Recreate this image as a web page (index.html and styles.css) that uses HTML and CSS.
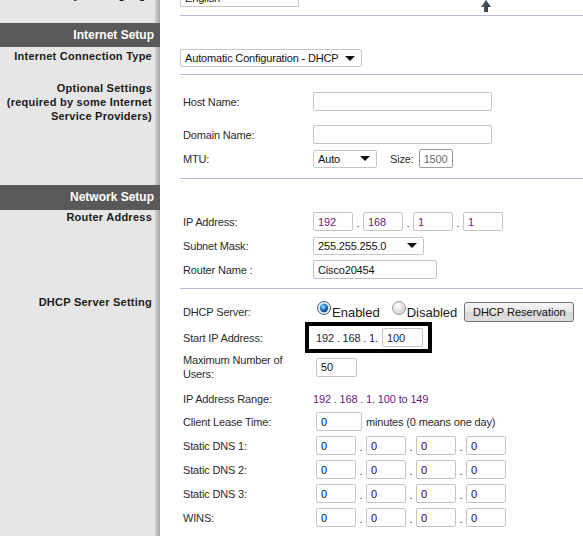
FILE: index.html
```html
<html lang="en">
<head>
    <meta charset="UTF-8">
    <title>Basic Setup</title>
    <link rel="stylesheet" href="styles.css">
</head>
<body>
<div class="page">

    <section class="sec lang">
        <div class="side"><p class="side-label">Select your language</p></div>
        <div class="main ruled">
            <div class="lang-row">
                <div class="select sel-lang"><span>English</span><i class="caret"></i></div>
                <svg class="up" width="10" height="12" viewBox="0 0 10 12">
                    <defs>
                        <linearGradient id="ug" x1="0" y1="0" x2="1" y2="0">
                            <stop offset="0" stop-color="#5b6570"/>
                            <stop offset="1" stop-color="#2a3037"/>
                        </linearGradient>
                    </defs>
                    <polygon points="5,0 10,7 7,7 7,12 3,12 3,7 0,7" fill="url(#ug)"/>
                </svg>
            </div>
        </div>
    </section>

    <section class="sec head">
        <div class="side"><h2 class="bar">Internet Setup</h2></div>
        <div class="main"></div>
    </section>

    <section class="sec conn">
        <div class="side"><p class="side-label">Internet Connection Type</p></div>
        <div class="main ruled">
            <div class="select sel-conn"><span>Automatic Configuration - DHCP</span><i class="caret"></i></div>
        </div>
    </section>

    <section class="sec optional">
        <div class="side"><p class="side-label">Optional Settings<br>(required by some Internet<br>Service Providers)</p></div>
        <div class="main ruled">
            <div class="row">
                <span class="lbl">Host Name:</span>
                <input class="txt w-host" type="text" value="">
            </div>
            <div class="row gap-domain">
                <span class="lbl">Domain Name:</span>
                <input class="txt w-host" type="text" value="">
            </div>
            <div class="row">
                <span class="lbl">MTU:</span>
                <div class="select sel-mtu"><span>Auto</span><i class="caret"></i></div>
                <span class="size-lbl">Size:</span>
                <input class="txt w-size dim" type="text" value="1500">
            </div>
        </div>
    </section>

    <section class="sec head head-net">
        <div class="side"><h2 class="bar">Network Setup</h2></div>
        <div class="main"></div>
    </section>

    <section class="sec router">
        <div class="side"><p class="side-label">Router Address</p></div>
        <div class="main ruled">
            <div class="row">
                <span class="lbl">IP Address:</span>
                <input class="txt w-oct ip" type="text" value="192"><span class="dot">.</span>
                <input class="txt w-oct ip" type="text" value="168"><span class="dot">.</span>
                <input class="txt w-oct ip" type="text" value="1"><span class="dot">.</span>
                <input class="txt w-oct ip" type="text" value="1">
            </div>
            <div class="row">
                <span class="lbl">Subnet Mask:</span>
                <div class="select sel-mask"><span>255.255.255.0</span><i class="caret"></i></div>
            </div>
            <div class="row">
                <span class="lbl">Router Name :</span>
                <input class="txt w-name" type="text" value="Cisco20454">
            </div>
        </div>
    </section>

    <section class="sec dhcp">
        <div class="side"><p class="side-label">DHCP Server Setting</p></div>
        <div class="main">
            <div class="row row-server">
                <span class="lbl">DHCP Server:</span>
                <label class="opt">
                    <svg width="14" height="14" viewBox="0 0 14 14">
                        <defs>
                            <radialGradient id="on" cx="0.4" cy="0.35" r="0.7">
                                <stop offset="0" stop-color="#bfe6ff"/>
                                <stop offset="0.45" stop-color="#2a8ad8"/>
                                <stop offset="1" stop-color="#0b2f6b"/>
                            </radialGradient>
                        </defs>
                        <circle cx="7" cy="7" r="6.5" fill="#e8eef4" stroke="#4b5d72"/>
                        <circle cx="7" cy="7" r="4.2" fill="url(#on)"/>
                    </svg>
                    <span>Enabled</span>
                </label>
                <label class="opt">
                    <svg width="14" height="14" viewBox="0 0 14 14">
                        <defs>
                            <radialGradient id="off" cx="0.4" cy="0.35" r="0.7">
                                <stop offset="0" stop-color="#ffffff"/>
                                <stop offset="1" stop-color="#cfcfcf"/>
                            </radialGradient>
                        </defs>
                        <circle cx="7" cy="7" r="6.5" fill="url(#off)" stroke="#9a9a9a"/>
                    </svg>
                    <span>Disabled</span>
                </label>
                <button class="btn" type="button">DHCP Reservation</button>
            </div>
            <div class="row row-start">
                <span class="lbl">Start IP Address:</span>
                <div class="mark">
                    <span class="fixed">192 . 168 . 1.</span>
                    <input class="txt w-start" type="text" value="100">
                </div>
            </div>
            <div class="row row-users">
                <span class="lbl">Maximum Number of<br>Users:</span>
                <input class="txt w-users pad" type="text" value="50">
            </div>
            <div class="row row-range">
                <span class="lbl">IP Address Range:</span>
                <span class="ip">192 . 168 . 1. 100 to 149</span>
            </div>
            <div class="row row-lease">
                <span class="lbl">Client Lease Time:</span>
                <input class="txt w-lease pad" type="text" value="0">
                <span class="after">minutes (0 means one day)</span>
            </div>
            <div class="row">
                <span class="lbl">Static DNS 1:</span>
                <input class="txt w-oct pad" type="text" value="0"><span class="dot">.</span>
                <input class="txt w-oct" type="text" value="0"><span class="dot">.</span>
                <input class="txt w-oct" type="text" value="0"><span class="dot">.</span>
                <input class="txt w-oct" type="text" value="0">
            </div>
            <div class="row">
                <span class="lbl">Static DNS 2:</span>
                <input class="txt w-oct pad" type="text" value="0"><span class="dot">.</span>
                <input class="txt w-oct" type="text" value="0"><span class="dot">.</span>
                <input class="txt w-oct" type="text" value="0"><span class="dot">.</span>
                <input class="txt w-oct" type="text" value="0">
            </div>
            <div class="row">
                <span class="lbl">Static DNS 3:</span>
                <input class="txt w-oct pad" type="text" value="0"><span class="dot">.</span>
                <input class="txt w-oct" type="text" value="0"><span class="dot">.</span>
                <input class="txt w-oct" type="text" value="0"><span class="dot">.</span>
                <input class="txt w-oct" type="text" value="0">
            </div>
            <div class="row">
                <span class="lbl">WINS:</span>
                <input class="txt w-oct pad" type="text" value="0"><span class="dot">.</span>
                <input class="txt w-oct" type="text" value="0"><span class="dot">.</span>
                <input class="txt w-oct" type="text" value="0"><span class="dot">.</span>
                <input class="txt w-oct" type="text" value="0">
            </div>
        </div>
    </section>

</div>
</body>
</html>
```

FILE: styles.css
```css
body {
    margin: 0;
    font-family: "Liberation Sans", Arial, sans-serif;
    font-size: 11px;
    letter-spacing: -0.16px;
    color: #2b2b2b;
    overflow: hidden;
}
.page {
    margin-top: -12px;
    min-height: calc(100vh + 12px);
    background: linear-gradient(to right, #e6e6e6 0, #e6e6e6 155px, #d2d2d2 155px, #a3a3a3 160px, #fff 160px);
}
.sec {
    display: grid;
    grid-template-columns: 160px 1fr;
}
.side-label {
    margin: 0;
    padding-right: 8px;
    text-align: right;
    font-weight: bold;
    font-size: 11px;
    line-height: 14px;
    letter-spacing: 0.25px;
    color: #1a1a1a;
}
.bar {
    margin: 0;
    height: 24px;
    padding-right: 6px;
    background: #595959;
    color: #fff;
    font-size: 12px;
    line-height: 24px;
    font-weight: bold;
    letter-spacing: 0;
    text-align: right;
}
.main {
    margin-left: 20px;
}
.ruled {
    border-bottom: 1px solid #b9b9e0;
}

/* sections */
.lang .main { padding-bottom: 8px; }
.lang-row { display: flex; align-items: flex-end; }
.up { margin-left: 182px; margin-bottom: -5px; }
.head { margin-top: 7px; }
.head-net { margin-top: 6px; }
.head-net .bar { height: 25px; line-height: 25px; }
.conn .side-label { padding-top: 2px; }
.conn .main { padding: 2px 0 7px; }
.optional .side-label { padding-top: 6px; }
.optional .main { padding: 17px 0 10px; }
.router .main { padding: 2px 0 9px; }
.dhcp .side-label { padding-top: 6px; }
.dhcp .main { padding-top: 12px; }

/* rows */
.row {
    display: flex;
    align-items: center;
    height: 19px;
    padding-left: 3px;
    margin-top: 5px;
}
.main .row:first-child { margin-top: 0; }
.row.gap-domain { margin-top: 14px; }
.lbl {
    width: 130px;
    flex: none;
    line-height: 14px;
}
.row-server { height: 21px; }
.row-start { height: 31px; margin-top: 0; }
.row-users { height: 28px; margin-top: 0; }
.row-range { margin-top: 8px; }
.row-lease { margin-top: 4px; }

/* controls */
.txt {
    box-sizing: border-box;
    height: 19px;
    margin: 0;
    padding: 0 4px;
    border: 1px solid #c4c4c4;
    border-radius: 2px;
    font-family: inherit;
    font-size: 11px;
    letter-spacing: inherit;
    color: #111;
    background: #fff;
}
.txt.ip, .ip { color: #6a1b78; }
.fixed { color: #2a1a3a; }
.txt.dim { border-color: #9c9c9c; color: #6d6d6d; }
.pad { margin-left: 3px; }
.w-host { width: 179px; }
.w-size { width: 34px; margin-left: 5px; }
.w-oct { width: 40px; }
.w-name { width: 124px; }
.w-start { width: 41px; margin-left: 4px; color: #2a1a3a; }
.w-users { width: 41px; }
.w-lease { width: 46px; }
.dot {
    width: 10px;
    text-align: center;
    align-self: flex-end;
    line-height: 16px;
}
.size-lbl { margin-left: 13px; }
.after { margin-left: 4px; }

.select {
    box-sizing: border-box;
    display: flex;
    align-items: center;
    justify-content: space-between;
    height: 18px;
    padding: 0 6px 0 4px;
    border: 1px solid #c6c6c6;
    border-radius: 2px;
    background: #fff;
    color: #111;
}
.caret {
    flex: none;
    width: 0;
    height: 0;
    border-left: 5px solid transparent;
    border-right: 5px solid transparent;
    border-top: 5px solid #111;
}
.sel-lang { width: 119px; height: 19px; }
.sel-conn { width: 182px; }
.sel-mtu { width: 64px; }
.sel-mask { width: 111px; }

.opt {
    display: flex;
    align-items: flex-start;
    align-self: flex-start;
    margin-left: 4px;
}
.opt + .opt { margin-left: 12px; }
.opt span {
    margin-top: 4px;
    margin-left: 1px;
    font-size: 13px;
    line-height: 15px;
    letter-spacing: 0;
    color: #1a1a1a;
}
.btn {
    margin-left: 7px;
    height: 20px;
    width: 110px;
    padding: 0;
    border: 1px solid #707070;
    border-radius: 3px;
    background: linear-gradient(#f6f6f6, #e6e6e6 50%, #d8d8d8 51%, #dedede);
    font-family: inherit;
    font-size: 11px;
    color: #111;
}
.mark {
    display: flex;
    align-items: center;
    box-sizing: border-box;
    width: 127px;
    height: 31px;
    margin-left: -8px;
    padding-left: 7px;
    border: 4px solid #000;
}
```
